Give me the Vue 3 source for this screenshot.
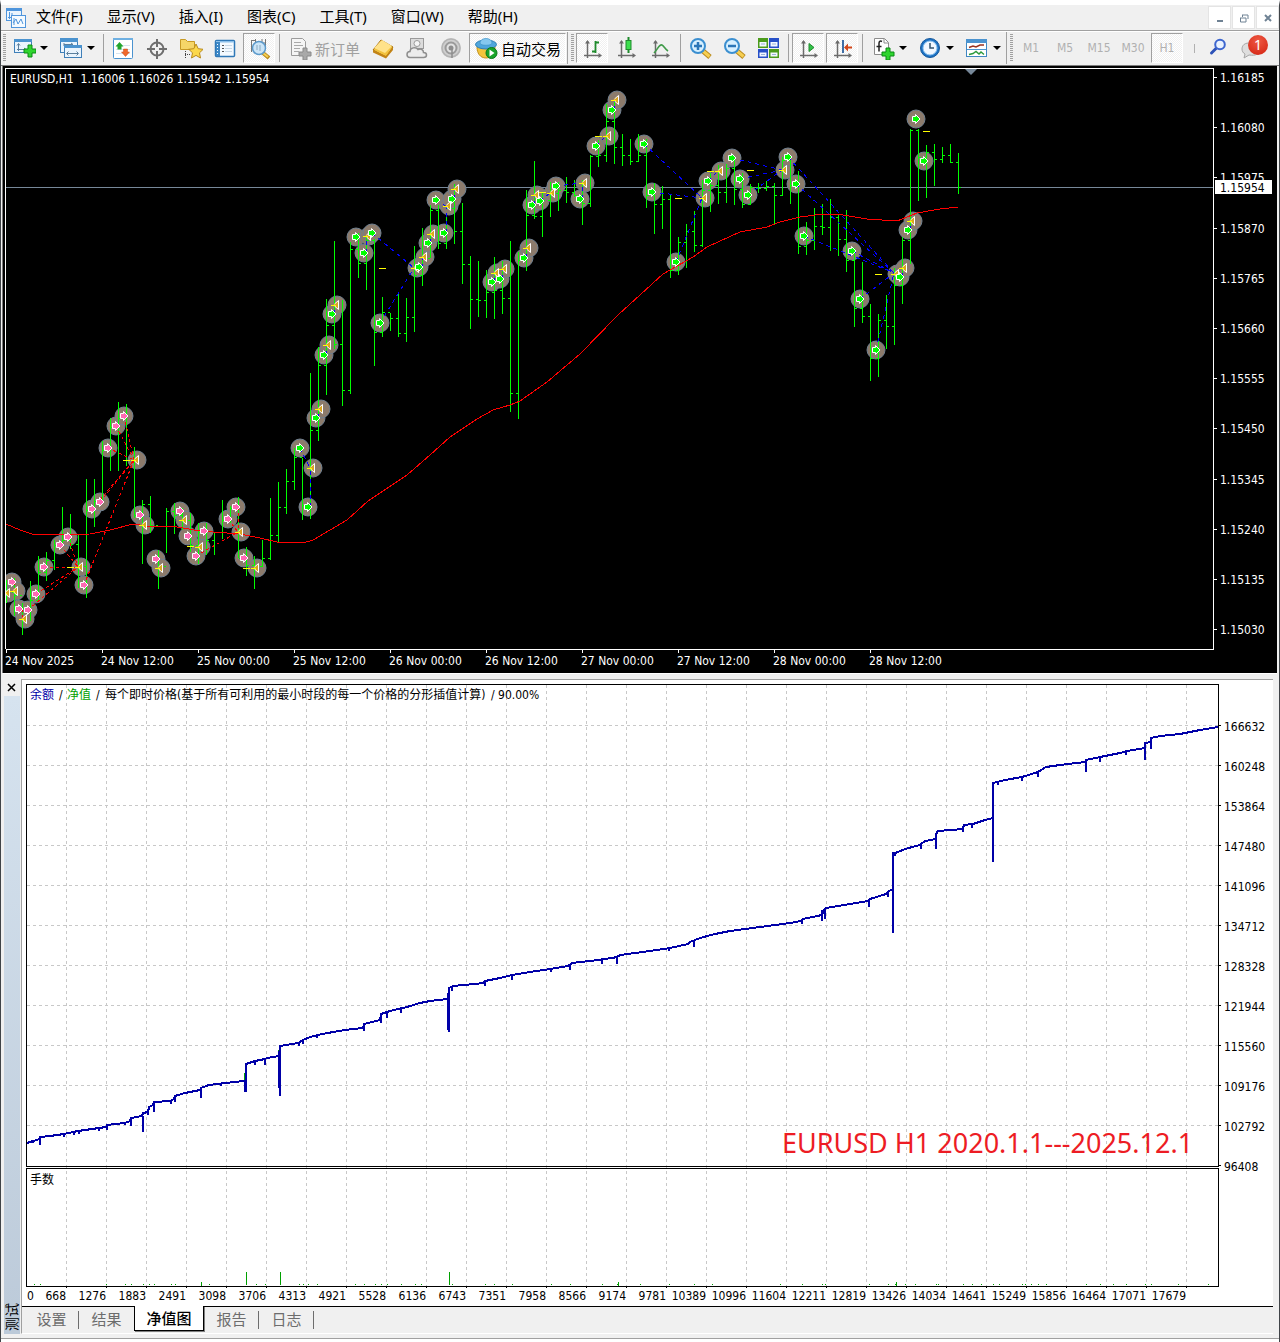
<script setup>
import { ref } from 'vue'

const menus = ['文件(F)', '显示(V)', '插入(I)', '图表(C)', '工具(T)', '窗口(W)', '帮助(H)']

const axes = '<path d="M7.500 22V5M4 19.500H20" stroke="#6b6b6b" stroke-width="1.500" fill="none"/><path d="M5 7.500 7.500 4 10 7.500zM18.500 17 22 19.500 18.500 22z" fill="#6b6b6b"/>'
const plus = (x, y) => `<path d="M${x - 2} ${y - 6}h4v4h4v4h-4v4h-4v-4h-4v-4h4z" fill="#2fd52f" stroke="#0b8a14"/>`
const lens = (sign) => `<path d="M15 15l7 6" stroke="#b98a1c" stroke-width="5"/><path d="M15 15l6.500 5.500" stroke="#f6cf52" stroke-width="3"/><circle cx="10" cy="10" r="7" fill="#d7f0ff" stroke="#3b8fd0" stroke-width="2"/><path d="${sign}" stroke="#2b76b8" stroke-width="2.500"/>`

const icons = {
  newChart: `<rect x="2.500" y="3.500" width="17" height="13" fill="#eaf4fd" stroke="#3f7fb8"/><path d="M2 3h18v3H2z" fill="#4b93cf"/><path d="M6.500 8v7M5 13.500h9M5 9.500l1.500-2 1.500 2M12 12l2 1.500-2 1.500" stroke="#5b7f9d" fill="none"/>${plus(18, 15)}`,
  profiles: '<rect x="1.500" y="2.500" width="17" height="14" fill="#eaf4fd" stroke="#3f7fb8"/><path d="M1 2h18v4H1z" fill="#4b93cf"/><path d="M5 8.500h9M5 7v3M12 7l2 1.500" stroke="#5b7f9d"/><rect x="5.500" y="9.500" width="17" height="12" fill="#eaf4fd" stroke="#3f7fb8"/><path d="M5 9h18v3H5z" fill="#4b93cf"/><path d="M8 17.500h11M9.500 15.500l-2 2 2 2M17.500 15.500l2 2-2 2" stroke="#5b7f9d" fill="none"/>',
  market: '<rect x="2.500" y="2.500" width="19" height="20" rx="1" fill="#fff" stroke="#4b93cf"/><path d="M2 2h20v2H2z" fill="#6fb0e2"/><path d="M5 9.500h14M5 13.500h14M5 17.500h14" stroke="#d6e4ef"/><path d="M8.500 6l4 4.500h-2v3h-4v-3h-2z" fill="#22a52c"/><path d="M14.500 20.500l-4-4.500h2v-3h4v3h2z" fill="#f0682a" stroke="#c4481a" stroke-width=".5"/>',
  cross: '<circle cx="12" cy="13" r="6.500" fill="none" stroke="#6e6e6e" stroke-width="2"/><path d="M12 3v8M12 15v8M2 13h8M14 13h8" stroke="#6e6e6e" stroke-width="2"/>',
  navigator: '<path d="M1.500 3.500h5l2 2h7v8h-14z" fill="#f5d668" stroke="#c79a25"/><path d="M6.500 15v7M6 18.500h5" stroke="#444" stroke-dasharray="1 1"/><path d="M17 8l2.200 4.700 5 .6-3.700 3.500 1 5.200-4.500-2.600-4.500 2.600 1-5.200-3.700-3.500 5-.6z" fill="#fbd84b" stroke="#b98a1c"/>',
  terminal: '<rect x="2.500" y="4.500" width="19" height="16" rx="1" fill="#f4faff" stroke="#2f78b7" stroke-width="1.500"/><path d="M3 5h18v1.500H3z" fill="#8cc0ea"/><path d="M3 6h4v14H3z" fill="#3c87c6"/><path d="M4.500 8v11" stroke="#fff" stroke-dasharray="1 2"/><path d="M9 9.500h2M9 12.500h2M9 15.500h2" stroke="#555"/><path d="M12 9.500h7M12 12.500h7M12 15.500h7" stroke="#c8d8e6"/>',
  tester: '<path d="M4.500 4v12M18.500 3v9M4 4.500h4M8.500 3v4M15 3v4h3" stroke="#777" fill="none"/><path d="M16 17l6 5" stroke="#b98a1c" stroke-width="4"/><path d="M16 17l5 4" stroke="#f6cf52" stroke-width="2"/><circle cx="12" cy="12" r="6.500" fill="#c4e2f7" fill-opacity=".85" stroke="#5c9acb" stroke-width="1.500"/><path d="M10 9v5M13 9v6" stroke="#8aa9c0"/>',
  order: '<path d="M3.500 2.500h11l3 3v14h-14z" fill="#f5f5f5" stroke="#9b9b9b"/><path d="M6 6.500h7M6 9.500h9M6 12.500h6M6 15.500h5" stroke="#a9a9a9"/><path d="M15 12h4v4h4v4h-4v4h-4v-4h-4v-4h4z" fill="#a9a9a9" stroke="#8a8a8a"/>',
  book: '<path d="M2 14l8-10 12 7-7 10z" fill="#f2c23e" stroke="#a56f10"/><path d="M3 12l8-8 10 6-7 7z" fill="#ffe28a"/><path d="M2 14l13 6 7-9v3l-7 8.500-13-6z" fill="#c38416"/>',
  vps: '<rect x="5.500" y="2.500" width="13" height="10" fill="#dcdcdc" stroke="#9a9a9a"/><circle cx="12" cy="7.500" r="3" fill="#f5f5f5" stroke="#9a9a9a"/><path d="M5 21.500c-4 0-4-6 0-6 0-4 6-5 8-2 3-1 5.500 0 5.500 3 4 0 4 5 0 5z" fill="#ececec" stroke="#8e8e8e" stroke-width="1.500"/>',
  signal: '<circle cx="12" cy="12" r="10" fill="#cfcfcf"/><circle cx="12" cy="12" r="9" fill="none" stroke="#b4b4b4" stroke-width="1.500"/><circle cx="12" cy="12" r="5.500" fill="#e2e2e2" stroke="#9a9a9a" stroke-width="2"/><circle cx="12" cy="12" r="2.500" fill="#8d8d8d"/><path d="M13 13v9" stroke="#8d8d8d" stroke-width="1.500"/>',
  auto: '<path d="M3 11c0 6 3 11 9 11s9-5 9-11z" fill="#f3c43c" stroke="#c4921b"/><ellipse cx="12" cy="8.500" rx="10.500" ry="4.500" fill="#4fa6dc" stroke="#2f7fb5"/><path d="M6 7c0-6 12-6 12 0 0 3-12 3-12 0z" fill="#86c8ef" stroke="#3f93c8" stroke-width=".7"/><circle cx="17.500" cy="17" r="5.500" fill="#19a32a" stroke="#0a7a18"/><path d="M15.500 13.500v7l5-3.500z" fill="#fff"/>',
  bars: `${axes}<path d="M15.500 5v12M12 15.500h3M16 6.500h3" stroke="#1f8b2c" stroke-width="1.800" fill="none"/>`,
  candles: `${axes}<path d="M14.500 1v16" stroke="#1f8b2c" stroke-width="2"/><rect x="12" y="4.500" width="5" height="9" fill="#3ddf4e" stroke="#1f8b2c"/>`,
  line: `${axes}<path d="M6 17c4-4 5-9 8-8 2 1 3 4 6 6" stroke="#3f9a48" stroke-width="1.600" fill="none"/>`,
  zoomIn: lens('M6 10h8M10 6v8'),
  zoomOut: lens('M6 10h8'),
  tile: '<path d="M2 2h10v10H2z" fill="#4c9c1c"/><path d="M13 2h10v10H13zM2 13h10v9H2z" fill="#2750c8"/><path d="M13 13h10v9H13z" fill="#4c9c1c"/><path d="M3.500 6h7v4.500h-7zM14.500 6h7v4.500h-7zM3.500 16.500h7v4h-7zM14.500 16.500h7v4h-7z" fill="#f3f8ff"/><path d="M5 8h4M16 8h4M5 18.500h4M16 18.500h4" stroke="#9ab2d8"/>',
  scroll: `${axes}<path d="M13 7.500v8l5-4z" fill="#33c24a" stroke="#1f8b2c"/>`,
  shift: `${axes}<path d="M13 4v13" stroke="#2c5f9c" stroke-width="1.800"/><path d="M14 11.500l4-4v3h4v2h-4v3z" fill="#d2471b"/>`,
  indicator: `<path d="M3.500 2.500h10l4 4v12h-14z" fill="#fff" stroke="#8c8c8c"/><path d="M13 3v4h4" fill="none" stroke="#8c8c8c"/><path d="M11 5.500c-2-1-3 0-3 2v8M5.500 10.500h5" stroke="#222" stroke-width="1.500" fill="none"/>${plus(17, 18)}`,
  clock: '<circle cx="12" cy="12" r="9.500" fill="#1d72c4" stroke="#16589b"/><circle cx="12" cy="12" r="7" fill="#f2f8ff" stroke="#8bc2ef"/><path d="M12 7v5h4" stroke="#35546f" stroke-width="1.500" fill="none"/>',
  template: '<rect x="1.500" y="3.500" width="20" height="17" fill="#fff" stroke="#3f87c2"/><path d="M1 3h21v4H1z" fill="#4b93cf"/><path d="M2 13.500h19" stroke="#4b93cf"/><path d="M4 11.500l4-1.500 3 1 4-2h4" stroke="#9a3220" stroke-width="1.500" fill="none"/><path d="M4 18.500l4-1 3-2 3 2.500 2-2 3 2.500" stroke="#2d9a3c" stroke-width="1.500" fill="none"/>',
  search: '<path d="M11 12.500l-4.500 4.500" stroke="#2d52b8" stroke-width="3" stroke-linecap="round"/><circle cx="15" cy="8.500" r="4.800" fill="#e9f2ff" stroke="#3d66cf" stroke-width="2"/>',
  chat: '<path d="M10 7c-6 0-7 4-7 6 0 2 1 4 3 5l-1 4 5-3c7 1 11-1 11-6s-5-6-11-6z" fill="#dedede" stroke="#a5a5a5"/>',
}

const tools = [
  { k: 'drop', icon: 'newChart', label: '新图表' },
  { k: 'drop', icon: 'profiles', label: '配置文件' },
  { k: 'sep' },
  { k: 'icon', icon: 'market', label: '市场报价' },
  { k: 'icon', icon: 'cross', label: '数据窗口' },
  { k: 'icon', icon: 'navigator', label: '导航' },
  { k: 'icon', icon: 'terminal', label: '终端' },
  { k: 'icon', icon: 'tester', label: '策略测试', on: true },
  { k: 'sep' },
  { k: 'wide', icon: 'order', text: '新订单', off: true },
  { k: 'icon', icon: 'book', label: 'MetaEditor' },
  { k: 'icon', icon: 'vps', label: 'VPS' },
  { k: 'icon', icon: 'signal', label: '信号' },
  { k: 'auto', icon: 'auto', text: '自动交易', on: true },
  { k: 'grip' },
  { k: 'icon', icon: 'bars', label: '柱状图', on: true },
  { k: 'icon', icon: 'candles', label: '蜡烛图' },
  { k: 'icon', icon: 'line', label: '折线图' },
  { k: 'sep' },
  { k: 'icon', icon: 'zoomIn', label: '放大' },
  { k: 'icon', icon: 'zoomOut', label: '缩小' },
  { k: 'icon', icon: 'tile', label: '平铺窗口' },
  { k: 'sep' },
  { k: 'icon', icon: 'scroll', label: '自动滚动', on: true },
  { k: 'icon', icon: 'shift', label: '图表平移', on: true },
  { k: 'sep' },
  { k: 'drop', icon: 'indicator', label: '指标' },
  { k: 'drop', icon: 'clock', label: '时段' },
  { k: 'drop', icon: 'template', label: '模板' },
  { k: 'grip' },
  { k: 'period', text: 'M1' },
  { k: 'period', text: 'M5' },
  { k: 'period', text: 'M15' },
  { k: 'period', text: 'M30' },
  { k: 'period', text: 'H1', on: true },
]

const priceLabels = ['1.16185', '1.16080', '1.15975', '1.15870', '1.15765', '1.15660', '1.15555', '1.15450', '1.15345', '1.15240', '1.15135', '1.15030']
const priceY = (i) => Math.round(77 + i * 50.2)
const timeLabels = ['24 Nov 2025', '24 Nov 12:00', '25 Nov 00:00', '25 Nov 12:00', '26 Nov 00:00', '26 Nov 12:00', '27 Nov 00:00', '27 Nov 12:00', '28 Nov 00:00', '28 Nov 12:00']

// high, low, close of every hourly bar
const bars = [
  [580, 603, 592], [578, 616, 595], [603, 635, 608], [581, 621, 600], [556, 600, 572], [552, 581, 560], [540, 570, 545], [507, 546, 540],
  [514, 549, 544], [535, 588, 566], [479, 598, 510], [479, 527, 501], [441, 503, 450], [418, 471, 427], [402, 471, 418], [404, 466, 460],
  [447, 518, 515], [500, 564, 504], [496, 533, 525], [550, 589, 566], [508, 553, 511], [503, 534, 515], [508, 530, 520], [513, 552, 545],
  [523, 564, 532], [523, 555, 540], [533, 555, 532], [500, 539, 520], [506, 523, 508], [497, 558, 558], [547, 576, 565], [556, 589, 566],
  [540, 567, 558], [498, 560, 535], [482, 542, 507], [469, 514, 481], [448, 490, 457], [458, 520, 505], [373, 519, 430], [347, 441, 365],
  [299, 395, 325], [241, 349, 344], [300, 406, 390], [242, 394, 249], [233, 278, 263], [237, 290, 240], [239, 366, 332], [297, 337, 312],
  [313, 331, 318], [294, 337, 333], [298, 342, 317], [246, 332, 275], [228, 286, 258], [205, 258, 210], [205, 249, 243], [213, 249, 208],
  [184, 244, 231], [203, 284, 264], [256, 329, 299], [261, 317, 300], [270, 318, 292], [257, 319, 290], [261, 314, 298], [241, 412, 393],
  [252, 419, 260], [190, 271, 215], [161, 219, 216], [192, 237, 200], [182, 217, 193], [182, 211, 190], [177, 203, 192], [180, 197, 195],
  [180, 225, 203], [155, 207, 156], [140, 167, 155], [104, 162, 121], [100, 164, 147], [134, 166, 155], [139, 165, 161], [134, 162, 155],
  [139, 208, 195], [183, 234, 204], [186, 229, 199], [195, 278, 270], [237, 275, 242], [224, 268, 231], [211, 252, 245], [180, 247, 190],
  [173, 212, 185], [165, 204, 192], [164, 203, 168], [157, 205, 189], [173, 208, 204], [184, 205, 187], [183, 193, 188], [181, 191, 186],
  [183, 225, 195], [157, 196, 160], [157, 204, 185], [171, 254, 246], [222, 255, 240], [208, 250, 226], [204, 235, 227], [199, 251, 217],
  [214, 256, 239], [210, 272, 260], [248, 327, 308], [262, 323, 316], [304, 381, 358], [314, 377, 320], [295, 349, 326], [268, 345, 285],
  [237, 304, 240], [129, 264, 130], [129, 201, 157], [145, 198, 152], [144, 186, 159], [147, 163, 155], [144, 163, 162], [153, 194, 187],
]
const barPath = bars
  .map(([h, l, c], i) => {
    const x = 6 + i * 8
    const open = i ? `M${x - 2} ${bars[i - 1][2]}.5h2` : ''
    return `M${x}.5 ${h}V${l}${open}M${x + 1} ${c}.5h2`
  })
  .join('')

// p: sell entry, g: buy entry, t: exit
const marks = [
  ['t', 8, 593], ['p', 12, 582], ['t', 16, 591], ['p', 19, 609], ['p', 28, 610], ['t', 25, 619], ['p', 36, 594], ['p', 44, 567], ['p', 60, 545], ['p', 68, 537],
  ['t', 81, 567], ['p', 84, 585], ['p', 92, 509], ['p', 100, 502], ['p', 108, 448], ['p', 116, 426], ['p', 124, 416], ['t', 137, 460],
  ['p', 140, 515], ['t', 145, 525], ['p', 156, 559], ['t', 161, 568], ['p', 180, 511], ['t', 185, 520], ['p', 188, 536], ['t', 201, 547],
  ['p', 196, 556], ['p', 204, 531], ['p', 228, 519], ['p', 236, 507], ['t', 241, 532], ['p', 244, 558], ['t', 257, 568],
  ['g', 300, 448], ['t', 313, 468], ['g', 308, 507], ['g', 316, 418], ['t', 321, 409], ['g', 324, 355], ['t', 329, 345], ['g', 332, 314],
  ['t', 337, 305], ['g', 356, 237], ['g', 364, 253], ['t', 369, 236], ['g', 372, 233], ['g', 380, 323], ['t', 417, 268], ['g', 419, 267],
  ['t', 425, 257], ['g', 428, 243], ['t', 433, 234], ['g', 436, 200], ['g', 444, 233], ['t', 449, 206], ['g', 452, 199], ['t', 457, 189],
  ['g', 492, 282], ['t', 497, 273], ['g', 500, 279], ['t', 505, 269], ['g', 524, 258], ['t', 529, 248], ['g', 532, 205], ['t', 537, 195],
  ['g', 540, 201], ['t', 553, 193], ['g', 556, 186], ['g', 580, 199], ['t', 585, 183], ['g', 596, 146], ['t', 609, 136], ['g', 612, 110],
  ['t', 617, 100], ['g', 644, 144], ['g', 652, 192], ['g', 676, 262], ['t', 705, 198], ['g', 708, 181], ['t', 721, 171], ['g', 732, 158],
  ['g', 740, 179], ['g', 748, 195], ['t', 785, 170], ['g', 788, 157], ['g', 796, 184], ['g', 804, 236], ['g', 852, 251], ['g', 860, 299],
  ['g', 876, 350], ['t', 897, 274], ['g', 900, 277], ['t', 905, 268], ['g', 908, 230], ['t', 913, 221], ['g', 916, 119], ['g', 924, 161],
]
const yellow = [[67, 567], [123, 460], [187, 546], [243, 568], [379, 268], [539, 192], [595, 136], [675, 198], [707, 171], [747, 170], [875, 274], [923, 131]]

const join = (list) => list.map(([a, b, c, d]) => `M${a} ${b}L${c} ${d}`).join('')
const sellLinks = join([
  [124, 416, 134, 460], [116, 426, 134, 460], [108, 448, 134, 460], [100, 502, 134, 460], [92, 509, 134, 460], [84, 585, 134, 460],
  [60, 545, 78, 567], [68, 537, 78, 567], [44, 567, 78, 567], [36, 594, 78, 567], [28, 610, 78, 567], [196, 556, 238, 532],
  [228, 519, 238, 532], [238, 507, 238, 532], [15, 582, 14, 591], [22, 609, 22, 619],
])
const buyLinks = join([
  [300, 448, 310, 468], [310, 507, 310, 468], [318, 418, 318, 409], [326, 355, 326, 345], [334, 314, 334, 305], [356, 237, 366, 236],
  [366, 253, 366, 236], [372, 233, 414, 268], [380, 323, 414, 268], [422, 268, 422, 257], [430, 243, 430, 234], [436, 200, 446, 206],
  [446, 233, 446, 206], [454, 199, 454, 189], [494, 282, 494, 273], [502, 279, 502, 269], [526, 258, 526, 248], [534, 205, 534, 195],
  [540, 201, 550, 193], [556, 186, 582, 183], [582, 199, 582, 183], [596, 146, 606, 136], [614, 110, 614, 100], [644, 144, 702, 198],
  [652, 192, 702, 198], [676, 262, 702, 198], [708, 181, 718, 171], [732, 158, 782, 170], [740, 179, 782, 170], [748, 195, 782, 170],
  [788, 157, 894, 273], [796, 184, 894, 273], [804, 236, 894, 273], [852, 251, 894, 273], [860, 299, 894, 273], [876, 350, 894, 273],
  [902, 277, 902, 268], [910, 230, 910, 221],
])
const average = '6,524 20,530 32,534 47,535 90,534 110,530 133,524 147,526 177,527 200,531 240,534 260,538 277,542 303,543 313,540 330,530 347,520 368,501 407,475 430,455 450,437 477,419 493,410 510,405 520,401 547,382 580,354 618,315 663,274 693,257 707,247 740,232 767,227 780,222 800,217 823,214 843,215 867,219 897,221 917,213 940,209 958,207'

const equityTicks = [166632, 160248, 153864, 147480, 141096, 134712, 128328, 121944, 115560, 109176, 102792, 96408]
const tradeTicks = [668, 1276, 1883, 2491, 3098, 3706, 4313, 4921, 5528, 6136, 6743, 7351, 7958, 8566, 9174, 9781, 10389, 10996, 11604, 12211, 12819, 13426, 14034, 14641, 15249, 15856, 16464, 17071, 17679]
const gridX = tradeTicks.map((_, i) => `M${66 + i * 40}.5 685V1286`).join('')
const gridY = equityTicks.slice(0, 11).map((_, i) => `M27 ${725 + i * 40}.5H1218`).join('')

const balance = '27,1143 33,1141 40,1139 40,1137 50,1136 64,1134 78,1131 92,1129 106,1127 107,1125 125,1123 130,1121 131,1118 142,1116 143,1113 148,1112 149,1107 153,1105 154,1102 170,1101 174,1099 175,1096 185,1093 200,1090 201,1088 209,1085 225,1083 244,1081 246,1081 246,1064 255,1061 265,1059 267,1058 279,1056 280,1046 298,1043 303,1040 310,1037 322,1034 345,1030 363,1028 364,1024 380,1020 381,1014 390,1011 407,1007 420,1003 430,1001 448,999 449,988 453,986 475,984 483,983 485,981 500,978 512,975 530,972 550,969 568,966 572,963 590,961 612,958 617,957 620,955 650,951 670,948 688,944 690,942 700,938 715,934 730,931 760,927 790,923 801,921 803,919 822,915 824,910 826,908 850,904 868,901 870,899 886,894 889,891 893,889 893,854 905,849 920,845 925,841 936,839 936,834 938,831 963,829 964,825 973,824 985,820 993,818 993,783 1005,780 1022,777 1038,772 1046,767 1060,765 1085,762 1086,760 1100,757 1120,753 1127,751 1145,748 1145,743 1151,742 1151,738 1160,736 1180,734 1200,730 1218,727'
const dips = [
  [33, 1141, 1143], [40, 1138, 1145], [64, 1134, 1137], [74, 1132, 1135], [79, 1131, 1134], [99, 1128, 1131], [107, 1126, 1130], [125, 1122, 1125],
  [131, 1119, 1126], [143, 1116, 1132], [148, 1111, 1115], [154, 1104, 1112], [171, 1100, 1104], [175, 1097, 1102], [201, 1089, 1098], [221, 1083, 1086],
  [245, 1080, 1092], [246, 1070, 1092], [255, 1061, 1065], [265, 1059, 1065], [279, 1056, 1088], [280, 1048, 1096], [299, 1042, 1046], [303, 1040, 1044],
  [317, 1035, 1038], [364, 1024, 1031], [381, 1016, 1023], [387, 1012, 1018], [401, 1009, 1013], [448, 999, 1030], [449, 990, 1032],
  [452, 986, 991], [485, 981, 986], [512, 976, 980], [551, 968, 972], [570, 965, 970], [602, 959, 964], [617, 957, 964],
  [669, 948, 951], [694, 940, 947], [802, 919, 924], [822, 910, 921], [825, 908, 919], [869, 900, 907], [888, 891, 897], [893, 852, 933],
  [895, 853, 856], [921, 844, 849], [936, 834, 849], [963, 826, 832], [972, 824, 828], [993, 783, 862], [998, 781, 785], [1022, 777, 781], [1038, 771, 777],
  [1086, 760, 772], [1100, 757, 762], [1126, 751, 755], [1145, 743, 760], [1151, 738, 749],
]
const dipPath = dips.map(([x, a, b]) => `M${x} ${a}V${b}`).join('')
const lots = [34, 40, 106, 125, 131, 143, 149, 154, 171, 175, 209, 256, 265, 299, 303, 308, 317, 355, 364, 375, 381, 387, 401, 415, 421, 452, 485, 494, 512, 551, 570, 602, 617, 640, 669, 694, 712, 780, 802, 822, 825, 869, 888, 895, 905, 915, 936, 938, 963, 972, 981, 993, 999, 1022, 1025, 1031, 1038, 1046, 1086, 1100, 1113, 1126, 1145, 1151, 1178, 1208]
const lotPath = lots.map((x) => `M${x} 1284.500h1`).join('')

const tabs = ['设置', '结果', '净值图', '报告', '日志']
const tab = ref('净值图')
</script>

<template>
  <div class="app">
    <header class="menubar">
      <svg class="logo" width="22" height="22" viewBox="0 0 22 22">
        <rect x="1.500" y="1.500" width="15" height="12" fill="#eaf4fd" stroke="#4f95dc" />
        <path d="M1 1h16v3H1z" fill="#4f95dc" />
        <path d="M4.500 5v7M3 10.500h10M10 8v3M7 6v2" stroke="#4f95dc" />
        <rect x="6.500" y="8.500" width="14" height="12" fill="#f4faff" stroke="#4f95dc" />
        <path d="M9 11v7M8 16l3-4 2 5 3-5 2 5" stroke="#4f95dc" fill="none" />
      </svg>
      <nav class="menus">
        <button v-for="m in menus" :key="m" class="menu">{{ m }}</button>
      </nav>
      <div class="winbtns">
        <button aria-label="最小化"><svg width="10" height="10"><path d="M2 8h6" stroke="#6f8294" stroke-width="2" /></svg></button>
        <button aria-label="还原"><svg width="10" height="10"><path d="M3 2h6v4M1 5h6v4H1.500V5M3.500 4V2" stroke="#6f8294" fill="none" /></svg></button>
        <button aria-label="关闭"><svg width="10" height="10"><path d="M2 2l6 6M8 2l-6 6" stroke="#6f8294" stroke-width="2" /></svg></button>
      </div>
    </header>

    <div class="toolbar">
      <i class="dots first"></i>
      <template v-for="(t, i) in tools" :key="i">
        <i v-if="t.k === 'sep'" class="sep"></i>
        <i v-else-if="t.k === 'grip'" class="grip"><i class="dots"></i></i>
        <button v-else class="tool" :class="[t.k, { on: t.on, off: t.off }]" :aria-label="t.label">
          <svg v-if="t.icon" width="24" height="24" viewBox="0 0 24 24" v-html="icons[t.icon]"></svg>
          <span v-if="t.text">{{ t.text }}</span>
          <svg v-if="t.k === 'drop'" class="caret" width="8" height="4"><path d="M0 0h8L4 4z" fill="#000" /></svg>
        </button>
      </template>
      <i class="cut"></i>
      <button class="tool icon" aria-label="搜索"><svg width="24" height="24" viewBox="0 0 24 24" v-html="icons.search"></svg></button>
      <button class="tool icon chat">
        <svg width="24" height="24" viewBox="0 0 24 24" v-html="icons.chat"></svg>
        <span class="badge">1</span>
      </button>
    </div>

    <main class="chart">
      <svg viewBox="3 66 1274 607">
        <defs>
          <clipPath id="plot"><rect x="6" y="69" width="1207" height="580" /></clipPath>
        </defs>
        <g class="crisp">
          <path d="M5.500 649V68.500H1213.500V649.500H5.500" fill="none" stroke="#fff" />
          <path v-for="(p, i) in priceLabels" :key="p" :d="`M1214 ${priceY(i)}.5h3`" stroke="#fff" />
          <path v-for="(t, i) in timeLabels" :key="t" :d="`M${6 + i * 96}.5 650v3`" stroke="#fff" />
          <path d="M6 187.500H1213" stroke="#778899" />
        </g>
        <g clip-path="url(#plot)">
          <circle v-for="(m, i) in marks" :key="i" :cx="m[1]" :cy="m[2]" r="9" fill="#8c7b6c" stroke="#708090" />
          <path class="crisp" :d="barPath" stroke="#00ff00" fill="none" />
          <polyline class="crisp" :points="average" fill="none" stroke="#ff0000" />
          <path class="crisp" :d="sellLinks" stroke="#ff0000" stroke-dasharray="3 3" />
          <path class="crisp" :d="buyLinks" stroke="#0000ff" stroke-dasharray="4 4" />
          <g v-for="(m, i) in marks" :key="'g' + i" :transform="`translate(${m[1]} ${m[2]})`">
            <template v-if="m[0] === 't'">
              <path d="M-4 0L1.500-4.500V4.500z" fill="#daa520" />
              <path d="M-2.500-1L1.500-4.500V4.500L-2.500 1" fill="none" stroke="#fff" />
              <path class="crisp" d="M-6 .5h5" stroke="#ffff00" />
            </template>
            <path v-else d="M-3.500-2.500H-.5V-4.500L4 0-.5 4.500V2.500H-3.500z" :fill="m[0] === 'p' ? '#ff69b4' : '#00ff00'" stroke="#fff" />
          </g>
          <path v-for="y in yellow" :key="y[0]" class="crisp" :d="`M${y[0]} ${y[1]}.5h7`" stroke="#ffff00" />
          <path d="M965 69h12l-6 6z" fill="#778899" />
        </g>
        <g class="axis light">
          <text x="10" y="83">EURUSD,H1&nbsp; 1.16006 1.16026 1.15942 1.15954</text>
          <text v-for="(p, i) in priceLabels" :key="p" x="1220" :y="priceY(i) + 5">{{ p }}</text>
          <text v-for="(t, i) in timeLabels" :key="t" :x="5 + i * 96" y="665">{{ t }}</text>
        </g>
        <rect x="1215" y="180" width="57" height="14" fill="#fff" />
        <text class="axis" x="1220" y="192">1.15954</text>
      </svg>
    </main>

    <section class="tester">
      <aside class="side">
        <button class="close" aria-label="关闭"><svg width="9" height="9"><path d="M1 1l7 7M8 1L1 8" stroke="#000" stroke-width="1.500" /></svg></button>
        <div class="strip"><span>测试</span></div>
      </aside>
      <div class="panel">
        <svg class="graph" viewBox="22 680 1251 626">
          <g class="crisp" fill="none">
            <path :d="gridX" stroke="#c8c8c8" stroke-dasharray="3 3" />
            <path :d="gridY" stroke="#c8c8c8" stroke-dasharray="3 3" />
            <rect x="26.500" y="684.500" width="1192" height="482" stroke="#000" />
            <rect x="26.500" y="1168.500" width="1192" height="118" stroke="#000" />
            <path v-for="(t, i) in equityTicks" :key="t" :d="`M1219 ${725 + i * 40}.5h2`" stroke="#000" />
            <path v-for="(t, i) in tradeTicks" :key="t" :d="`M${66 + i * 40}.5 1287v1`" stroke="#000" />
            <path d="M245 1073v8M279 1050v6M448 994v5" stroke="#00a000" stroke-width="2" />
            <polyline :points="balance" stroke="#0000a8" stroke-width="2" />
            <path :d="dipPath" stroke="#0000a8" stroke-width="2" />
            <path :d="lotPath" stroke="#00a000" />
            <path d="M246.500 1272v13M280.500 1272v13M449.500 1272v13M201.500 1282v4M618.500 1282v4M896.500 1282v4" stroke="#00a000" />
          </g>
          <g class="axis">
            <text y="699"><tspan x="30" fill="#0000a8">余额</tspan><tspan x="59">/</tspan><tspan x="67" fill="#00a000">净值</tspan><tspan x="96">/</tspan><tspan x="105">每个即时价格(基于所有可利用的最小时段的每一个价格的分形插值计算)</tspan><tspan x="491">/ 90.00%</tspan></text>
            <text x="30" y="1184">手数</text>
            <text v-for="(t, i) in equityTicks" :key="t" x="1224" :y="731 + i * 40">{{ t }}</text>
            <text x="27" y="1300">0</text>
            <text v-for="(t, i) in tradeTicks" :key="t" :x="66 + i * 40" y="1300" text-anchor="end">{{ t }}</text>
          </g>
          <text class="caption" x="782" y="1153">EURUSD H1 2020.1.1---2025.12.1</text>
        </svg>
        <div class="tabs" role="tablist">
          <button v-for="t in tabs" :key="t" role="tab" :aria-selected="t === tab" :class="{ active: t === tab }" @click="tab = t">{{ t }}</button>
        </div>
      </div>
    </section>
    <footer class="foot"></footer>
  </div>
</template>

<style>
body {
  margin: 0;
}
</style>

<style scoped>
.app {
  box-sizing: border-box;
  display: flex;
  flex-direction: column;
  background: #f0f0f0;
  border-top: 5px solid #fff;
  border-left: 1px solid #404448;
  border-right: 1px solid #404448;
  font-family: "Noto Sans", "Noto Sans CJK SC", sans-serif;
  font-size: 15px;
  color: #000;
}
button {
  font: inherit;
  color: inherit;
  background: none;
  border: 0;
  padding: 0;
}
svg {
  display: block;
  flex: none;
}
.menubar {
  display: flex;
  align-items: flex-start;
  height: 25px;
  padding-left: 4px;
  border-bottom: 1px solid #a0a0a0;
}
.logo {
  margin-top: 2px;
}
.menus {
  display: flex;
  flex: 1;
  margin-left: -3px;
}
.menu {
  padding: 0 12px;
  line-height: 23px;
  white-space: nowrap;
}
.winbtns {
  display: flex;
  gap: 1px;
  margin-top: 1px;
}
.winbtns button {
  box-sizing: border-box;
  display: grid;
  place-items: center;
  width: 23px;
  height: 23px;
  background: #fff;
  border: 1px solid #e4e4e4;
}
.toolbar {
  display: flex;
  align-items: center;
  height: 32px;
  padding-bottom: 1px;
  border-top: 1px solid #fff;
  border-bottom: 1px solid #7c7c7c;
  overflow: hidden;
}
.dots {
  display: block;
  flex: none;
  width: 3px;
  height: 28px;
  background: repeating-linear-gradient(#a0a0a0 0 1px, transparent 1px 2px);
}
.dots.first {
  margin: 0 0 0 2px;
}
.sep {
  flex: none;
  width: 6px;
  height: 28px;
  background: linear-gradient(#a0a0a0, #a0a0a0) 3px 0 / 1px 100% no-repeat;
}
.grip {
  display: flex;
  flex: none;
  align-items: center;
  box-sizing: border-box;
  width: 8px;
  height: 32px;
  padding-left: 3px;
  border-left: 1px solid #a0a0a0;
}
.tool {
  display: flex;
  flex: none;
  align-items: center;
  justify-content: center;
  box-sizing: border-box;
  height: 30px;
  white-space: nowrap;
}
.icon,
.period {
  width: 34px;
}
.drop {
  width: 47px;
  gap: 4px;
}
.wide {
  width: 84px;
  gap: 3px;
}
.auto {
  width: 99px;
  gap: 3px;
}
.off {
  color: #a0a0a0;
}
.period {
  font-family: "DejaVu Sans Condensed", "Noto Sans", sans-serif;
  font-size: 12px;
  color: #b0b0b0;
}
.on {
  border: 1px solid #fff;
  border-top-color: #a0a0a0;
  border-left-color: #a0a0a0;
  background: repeating-conic-gradient(#fff 0 25%, #f0f0f0 0 50%) 0 0 / 2px 2px;
  background-clip: padding-box;
}
.icon.on,
.period.on {
  width: 32px;
  margin: 0 1px;
}
.auto.on {
  width: 97px;
  margin: 0 1px;
}
.cut {
  flex: none;
  width: 16px;
  height: 9px;
  background: linear-gradient(#b0b0b0, #b0b0b0) 10px 0 / 1px 100% no-repeat;
}
.chat {
  position: relative;
}
.badge {
  position: absolute;
  top: 2px;
  right: 0;
  width: 20px;
  height: 20px;
  border-radius: 50%;
  background: radial-gradient(circle at 50% 30%, #ee5a44, #d3210f);
  color: #fff;
  font-size: 14px;
  line-height: 20px;
  text-align: center;
}
.chart {
  margin: 0 2px;
  background: #000;
  box-shadow: -1px 0 #7c7c7c, 0 1px #fff;
}
.chart svg,
.graph {
  width: 100%;
  height: auto;
}
.crisp {
  shape-rendering: crispEdges;
}
.axis {
  font-family: "DejaVu Sans Condensed", "Noto Sans CJK SC", sans-serif;
  font-size: 12px;
}
.light {
  fill: #fff;
}
.caption {
  font-family: "Noto Sans", sans-serif;
  font-size: 27px;
  fill: #ed1c24;
}
.tester {
  display: flex;
  margin-top: 6px;
  padding: 0 6px 0 3px;
}
.side {
  display: flex;
  flex: none;
  flex-direction: column;
  width: 17px;
}
.close {
  display: grid;
  place-items: center;
  width: 15px;
  height: 17px;
}
.strip {
  display: flex;
  flex: 1;
  align-items: flex-end;
  justify-content: center;
  width: 16px;
  background: linear-gradient(#d6e3ef, #bccad9);
}
.strip span {
  writing-mode: vertical-rl;
  text-orientation: sideways;
  transform: rotate(180deg);
  font-size: 14px;
  line-height: 16px;
  padding-top: 3px;
}
.panel {
  flex: 1;
  min-width: 0;
  border-left: 1px solid #a0a0a0;
  border-top: 1px solid #a0a0a0;
  border-bottom: 1px solid #fff;
}
.graph {
  background: #fff;
}
.tabs {
  display: flex;
  height: 26px;
  border-top: 1px solid #000;
  color: #6d6d6d;
}
.tabs button {
  position: relative;
  box-sizing: border-box;
  width: 55px;
  height: 24px;
  line-height: 22px;
}
.tabs button:first-child {
  width: 57px;
  padding-left: 2px;
}
.tabs button::after {
  content: "";
  position: absolute;
  top: 4px;
  right: 0;
  width: 1px;
  height: 18px;
  background: #6d6d6d;
}
.tabs button:nth-child(2)::after {
  content: none;
}
.tabs .active {
  width: 70px;
  margin-top: -1px;
  height: 25px;
  background: #fff;
  border: solid #000;
  border-width: 0 1px 1px;
  box-shadow: 1px 1px #808080;
  color: #000;
  font-weight: 500;
}
.tabs .active::after {
  content: none;
}
.foot {
  height: 3px;
  margin-top: 4px;
  background: #fff;
  border-top: 1px solid #a0a0a0;
}
</style>
